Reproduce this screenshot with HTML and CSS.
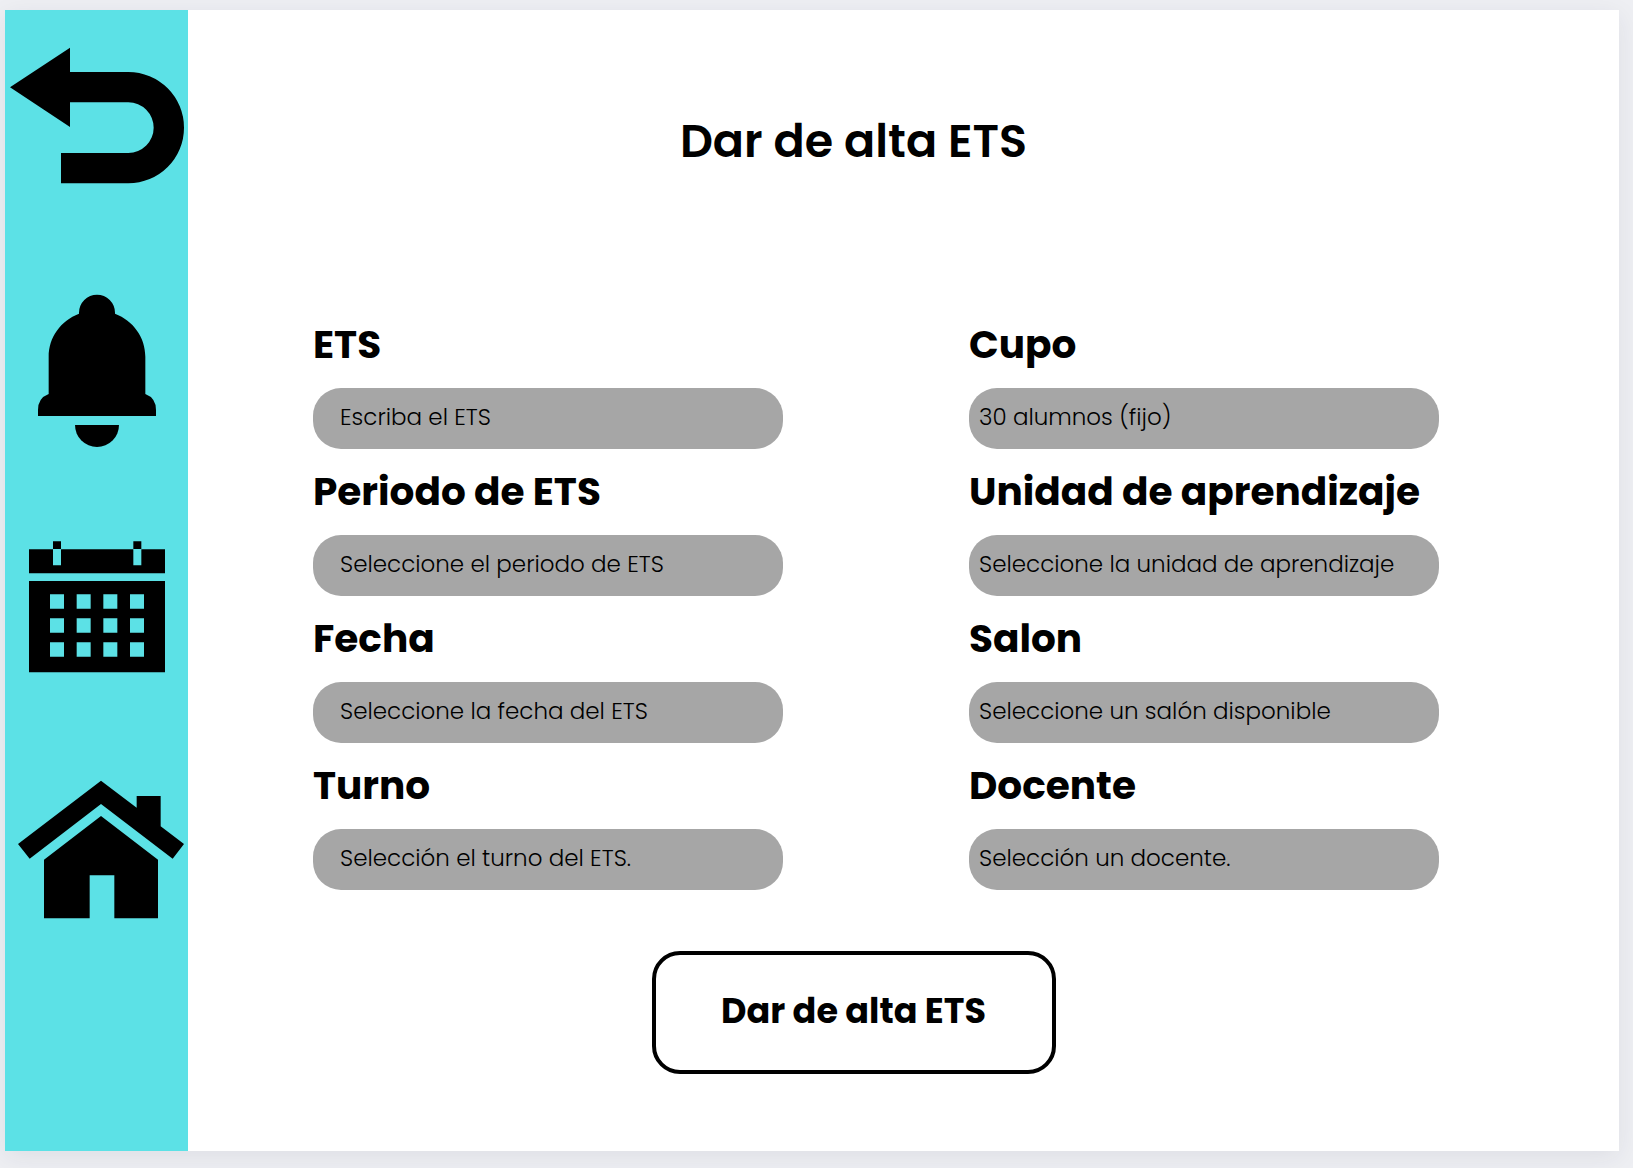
FILE: index.html
```html
<!DOCTYPE html>
<html lang="es">
<head>
<meta charset="utf-8">
<meta name="viewport" content="width=device-width, initial-scale=1">
<title>Dar de alta ETS</title>
<link rel="stylesheet" href="styles.css">
</head>
<body>
<div class="screen">
  <nav class="sidebar" aria-label="Principal">
    <a class="nav-link" href="#volver" aria-label="Volver">
      <svg class="nav-icon" viewBox="15 30 549 720" aria-hidden="true">
        <path d="M30 262 210 143V216H385A167 167 0 0 1 385 550H183V459H385A76 76 0 0 0 385 307H210V381Z"/>
      </svg>
    </a>
    <a class="nav-link" href="#avisos" aria-label="Avisos">
      <svg class="nav-icon" viewBox="15 -90 549 720" aria-hidden="true">
        <path d="M237 101V98A54 54 0 0 1 345 98V101C400 122 436 172 436 230V342Q468 354 468 390V408H114V390Q114 354 146 342V230C146 172 182 122 237 101Z"/>
        <path d="M225 435H357A66 66 0 0 1 225 435Z"/>
      </svg>
    </a>
    <a class="nav-link" href="#calendario" aria-label="Calendario">
      <svg class="nav-icon" viewBox="15 -120 549 720" aria-hidden="true">
        <path d="M159 34H183V57H159ZM400 34H424V57H400Z"/>
        <path d="M87 58H159V106H183V58H400V106H424V58H495V130H87Z"/>
        <path fill-rule="evenodd" d="M87 153H495V427H87ZM150 193V236H192V193ZM230 193V236H272V193ZM310 193V236H352V193ZM390 193V236H432V193ZM150 265V308H192V265ZM230 265V308H272V265ZM310 265V308H352V265ZM390 265V308H432V265ZM150 337V380H192V337ZM230 337V380H272V337ZM310 337V380H352V337ZM390 337V380H432V337Z"/>
      </svg>
    </a>
    <a class="nav-link" href="#inicio" aria-label="Inicio">
      <svg class="nav-icon" viewBox="15 -120 549 720" aria-hidden="true">
        <path d="M303 32 410 113V78H482V169L552 222 518 266 303 102 89 266 54 222Z"/>
        <path d="M303 138 474 269V445H343V316H269V445H132V269Z"/>
      </svg>
    </a>
  </nav>
  <main class="content">
    <h1 class="title">Dar de alta ETS</h1>
    <form class="form">
      <div class="columns">
        <div class="column">
          <div class="field">
            <label class="label" for="ets">ETS</label>
            <input class="control" id="ets" type="text" placeholder="Escriba el ETS">
          </div>
          <div class="field">
            <label class="label" for="periodo">Periodo de ETS</label>
            <select class="control" id="periodo"><option>Seleccione el periodo de ETS</option></select>
          </div>
          <div class="field">
            <label class="label" for="fecha">Fecha</label>
            <input class="control" id="fecha" type="text" placeholder="Seleccione la fecha del ETS">
          </div>
          <div class="field">
            <label class="label" for="turno">Turno</label>
            <select class="control" id="turno"><option>Selección el turno del ETS.</option></select>
          </div>
        </div>
        <div class="column column-compact">
          <div class="field">
            <label class="label" for="cupo">Cupo</label>
            <input class="control" id="cupo" type="text" value="30 alumnos (fijo)" readonly>
          </div>
          <div class="field">
            <label class="label" for="unidad">Unidad de aprendizaje</label>
            <select class="control" id="unidad"><option>Seleccione la unidad de aprendizaje</option></select>
          </div>
          <div class="field">
            <label class="label" for="salon">Salon</label>
            <select class="control" id="salon"><option>Seleccione un salón disponible</option></select>
          </div>
          <div class="field">
            <label class="label" for="docente">Docente</label>
            <select class="control" id="docente"><option>Selección un docente.</option></select>
          </div>
        </div>
      </div>
      <div class="actions">
        <button class="submit" type="submit">Dar de alta ETS</button>
      </div>
    </form>
  </main>
</div>
</body>
</html>
```
FILE: styles.css
```css
*,
*::before,
*::after {
  box-sizing: border-box;
}

body {
  margin: 0;
  padding: 10px 14px 17px 5px;
  background: #eeeff3;
  color: #000;
  font-family: Poppins, Inter, "Open Sans", sans-serif;
}

.screen {
  display: flex;
  min-height: calc(100vh - 27px);
  background: #fff;
  box-shadow: 0 6px 24px rgba(40, 44, 70, 0.08);
}

.sidebar {
  flex: none;
  width: 183px;
  background: #5ce1e6;
}

.nav-link {
  display: block;
  color: #000;
}

.nav-icon {
  display: block;
  width: 100%;
  height: 240px;
  fill: currentColor;
}

.content {
  flex: 1;
  min-width: 0;
  padding: 99px 180px 64px 125px;
}

.title {
  margin: 0 0 141px;
  padding-right: 45px;
  font-size: 46px;
  font-weight: 600;
  line-height: 64px;
  text-align: center;
}

.columns {
  display: grid;
  grid-template-columns: 1fr 1fr;
  gap: 186px;
}

.column {
  display: grid;
  gap: 12px;
  min-width: 0;
}

.field {
  display: grid;
  gap: 12px;
}

.label {
  font-size: 39px;
  font-weight: 700;
  line-height: 62px;
  white-space: nowrap;
}

.control {
  appearance: none;
  width: 100%;
  height: 61px;
  padding: 0 10px 4px 27px;
  border: 0;
  border-radius: 28px;
  background: #a6a6a6;
  color: #000;
  font-family: inherit;
  font-size: 23px;
  font-weight: 300;
}

.control::placeholder {
  color: #000;
  opacity: 1;
}

.column-compact .control {
  padding-left: 10px;
}

.actions {
  display: flex;
  justify-content: center;
  margin-top: 61px;
  padding-right: 45px;
}

.submit {
  width: 404px;
  height: 123px;
  padding: 0 0 4px;
  border: 4px solid #000;
  border-radius: 28px;
  background: #fff;
  color: #000;
  font-family: inherit;
  font-size: 35px;
  font-weight: 700;
}
```
